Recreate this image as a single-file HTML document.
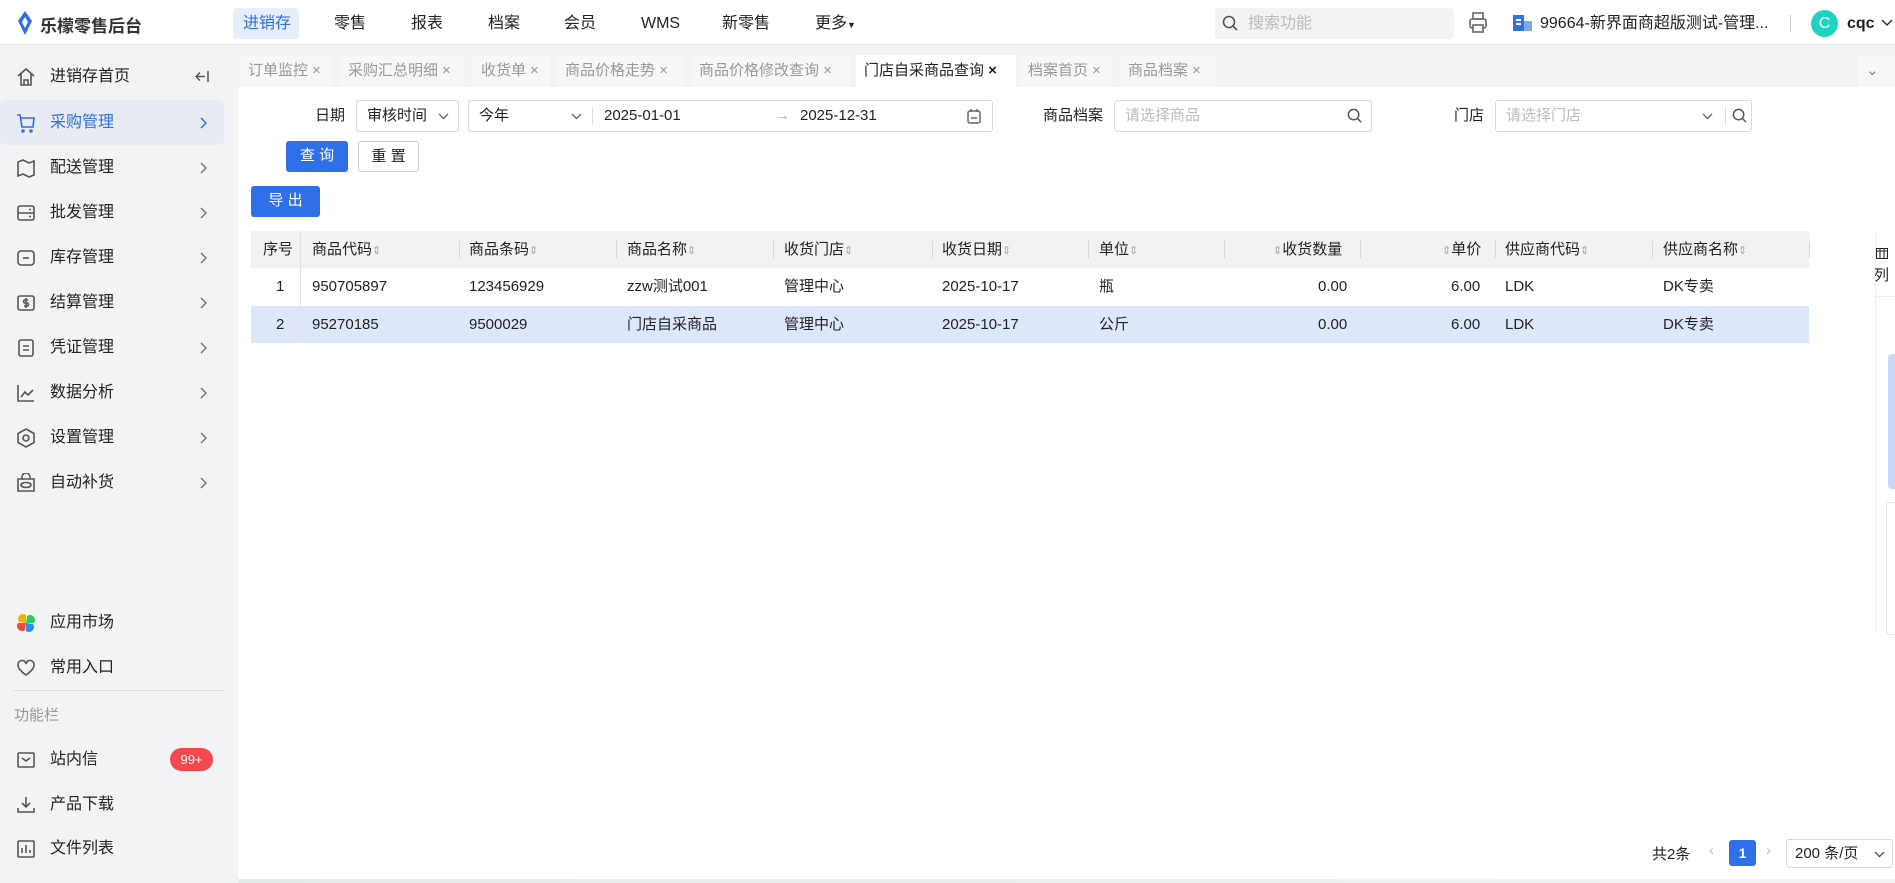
<!DOCTYPE html>
<html><head><meta charset="utf-8"><style>
*{box-sizing:border-box;margin:0;padding:0}
body{width:1895px;height:883px;overflow:hidden;background:#fff;font-family:"Liberation Sans","Noto Sans CJK SC",sans-serif;color:#222;font-size:15px;position:relative}
.a{position:absolute;white-space:nowrap}
.top{left:0;top:0;width:1895px;height:45px;border-bottom:1px solid #e2e3e6;background:#fff}
.nv{position:absolute;top:8px;height:31px;line-height:31px;font-size:16px}
.side{left:0;top:45px;width:238px;height:838px;background:#f2f3f5}
.si{position:absolute;left:0;width:224px;height:45px;font-size:16px;line-height:45px}
.si .t{position:absolute;left:50px}
.si .ch{position:absolute;left:199px;top:17px}
.si svg{position:absolute;left:16px;top:13px}
.tabbar{left:238px;top:45px;width:1657px;height:42px;background:#f2f3f5}
.tab{position:absolute;top:10px;height:32px;background:#f7f7f8;color:#999;font-size:15px;line-height:32px;padding-left:8px;border-radius:3px 3px 0 0}
.tab.on{background:#fff;color:#222}
.inp{position:absolute;border:1px solid #d9d9d9;border-radius:3px;height:32px;background:#fff;line-height:30px}
.lb{position:absolute;top:100px;height:32px;line-height:32px}
.btn{position:absolute;border-radius:3px;height:31px;line-height:29px;text-align:center;font-size:15px}
.th{position:absolute;top:0;height:37px;line-height:37px;font-size:15px;color:#222}
.sep{position:absolute;top:10px;width:1px;height:17px;background:#d8d8d8}
.td{position:absolute;line-height:37px;font-size:15px}
.sort{color:#aaa;font-size:11px}
</style></head><body>
<svg width="0" height="0" style="position:absolute"><defs><symbol id="chv" viewBox="0 0 8 12"><path d="M2 1l5 5-5 5" fill="none" stroke="#777" stroke-width="1.5"/></symbol></defs></svg>
<div class="a top">
 <svg class="a" style="left:17px;top:11px" width="16" height="24" viewBox="0 0 16 24"><path d="M8 0 L15 10 L8 24 L1 10Z" fill="#2f6fe8"/><path d="M8 6 L11 11 L8 17 L5 11Z" fill="#fff"/></svg>
 <div class="a" style="left:40px;top:12px;font-size:17px;font-weight:bold;color:#333">乐檬零售后台</div>
 <div class="a" style="left:233px;top:8px;width:66px;height:31px;background:#e6eefc;border-radius:4px"></div>
 <div class="nv" style="left:243px;color:#2f6fe8">进销存</div>
 <div class="nv" style="left:334px">零售</div>
 <div class="nv" style="left:411px">报表</div>
 <div class="nv" style="left:488px">档案</div>
 <div class="nv" style="left:564px">会员</div>
 <div class="nv" style="left:641px">WMS</div>
 <div class="nv" style="left:722px">新零售</div>
 <div class="nv" style="left:815px">更多<span style="font-size:9px">▼</span></div>
 <div class="a" style="left:1215px;top:8px;width:239px;height:31px;background:#f2f3f5;border-radius:4px"></div>
 <svg class="a" style="left:1222px;top:15px" width="17" height="17" viewBox="0 0 17 17"><circle cx="7" cy="7" r="5.5" fill="none" stroke="#555" stroke-width="1.6"/><path d="M11 11l4 4" stroke="#555" stroke-width="1.6"/></svg>
 <div class="nv" style="left:1248px;color:#bbb">搜索功能</div>
 <svg class="a" style="left:1468px;top:12px" width="20" height="22" viewBox="0 0 20 22"><rect x="5" y="1" width="10" height="6" fill="none" stroke="#666" stroke-width="1.6"/><rect x="2" y="7" width="16" height="9" rx="2" fill="none" stroke="#666" stroke-width="1.6"/><rect x="5" y="13" width="10" height="7" fill="#fff" stroke="#666" stroke-width="1.6"/></svg>
 <svg class="a" style="left:1512px;top:14px" width="22" height="18" viewBox="0 0 22 18"><rect x="1" y="1" width="11" height="16" fill="#2f6fe8"/><rect x="12" y="7" width="8" height="10" fill="#7fa6ef"/><rect x="4" y="5" width="5" height="2" fill="#fff"/><rect x="4" y="9" width="5" height="2" fill="#fff"/></svg>
 <div class="nv" style="left:1540px">99664-新界面商超版测试-管理...</div>
 <div class="a" style="left:1790px;top:15px;width:1px;height:17px;background:#ccc"></div>
 <div class="a" style="left:1811px;top:10px;width:27px;height:27px;border-radius:50%;background:#1fd3c0;color:#fff;text-align:center;line-height:27px;font-size:16px">C</div>
 <div class="nv" style="left:1847px;font-weight:bold">cqc</div>
 <svg class="a" style="left:1881px;top:19px" width="12" height="8" viewBox="0 0 12 8"><path d="M1 1l5 5 5-5" fill="none" stroke="#333" stroke-width="1.5"/></svg>
</div>
<div class="a side">
 <div class="si" style="top:9px"><svg width="20" height="20" viewBox="0 0 20 20" fill="none" stroke="#555" stroke-width="1.6"><path d="M2 9L10 2l8 7M5 7v11h10V7M8 18v-5h4v5"/></svg><span class="t">进销存首页</span><svg style="left:195px;top:16px" width="14" height="13" viewBox="0 0 14 13" fill="none" stroke="#555" stroke-width="1.5"><path d="M13 1v11M1 6.5h9M5 2.5l-4 4 4 4"/></svg></div>
 <div class="si" style="top:55px;background:#e8ebf1;border-radius:6px;color:#2f6fe8"><svg width="20" height="20" viewBox="0 0 20 20" fill="none" stroke="#2f6fe8" stroke-width="1.6"><path d="M1 2h3l2 12h11l1-9H5"/><circle cx="7" cy="18" r="1"/><circle cx="15" cy="18" r="1"/></svg><span class="t">采购管理</span><svg class="ch" width="8" height="12" viewBox="0 0 8 12" style="left:199px;top:17px"><path d="M2 1l5 5-5 5" fill="none" stroke="#2f6fe8" stroke-width="1.5"/></svg></div>
 <div class="si" style="top:100px"><svg width="20" height="20" viewBox="0 0 20 20" fill="none" stroke="#555" stroke-width="1.6"><path d="M2 4l5-2 6 3 5-2v14l-5 2-6-3-5 2z"/></svg><span class="t">配送管理</span><svg class="ch" width="8" height="12" style="left:199px;top:17px"><use href="#chv"/></svg></div>
 <div class="si" style="top:145px"><svg width="20" height="20" viewBox="0 0 20 20" fill="none" stroke="#555" stroke-width="1.6"><rect x="2" y="3" width="16" height="14" rx="2"/><path d="M2 10h16M13 6.5h2M13 13.5h2"/></svg><span class="t">批发管理</span><svg class="ch" width="8" height="12" style="left:199px;top:17px"><use href="#chv"/></svg></div>
 <div class="si" style="top:190px"><svg width="20" height="20" viewBox="0 0 20 20" fill="none" stroke="#555" stroke-width="1.6"><rect x="2" y="3" width="16" height="14" rx="3"/><path d="M7 10h6"/></svg><span class="t">库存管理</span><svg class="ch" width="8" height="12" style="left:199px;top:17px"><use href="#chv"/></svg></div>
 <div class="si" style="top:235px"><svg width="20" height="20" viewBox="0 0 20 20" fill="none" stroke="#555" stroke-width="1.6"><rect x="2" y="3" width="16" height="14" rx="2"/><path d="M12 7H9a1.5 1.5 0 000 3h2a1.5 1.5 0 010 3H8M10 5v10"/></svg><span class="t">结算管理</span><svg class="ch" width="8" height="12" style="left:199px;top:17px"><use href="#chv"/></svg></div>
 <div class="si" style="top:280px"><svg width="20" height="20" viewBox="0 0 20 20" fill="none" stroke="#555" stroke-width="1.6"><rect x="3" y="2" width="14" height="16" rx="2"/><path d="M7 8h6M7 12h6"/></svg><span class="t">凭证管理</span><svg class="ch" width="8" height="12" style="left:199px;top:17px"><use href="#chv"/></svg></div>
 <div class="si" style="top:325px"><svg width="20" height="20" viewBox="0 0 20 20" fill="none" stroke="#555" stroke-width="1.6"><path d="M2 2v16h16M5 14l4-5 3 3 5-5"/></svg><span class="t">数据分析</span><svg class="ch" width="8" height="12" style="left:199px;top:17px"><use href="#chv"/></svg></div>
 <div class="si" style="top:370px"><svg width="20" height="20" viewBox="0 0 20 20" fill="none" stroke="#555" stroke-width="1.6"><path d="M10 1l8 4.5v9L10 19l-8-4.5v-9z"/><circle cx="10" cy="10" r="3"/></svg><span class="t">设置管理</span><svg class="ch" width="8" height="12" style="left:199px;top:17px"><use href="#chv"/></svg></div>
 <div class="si" style="top:415px"><svg width="20" height="20" viewBox="0 0 20 20" fill="none" stroke="#555" stroke-width="1.6"><path d="M6 6V4a4 4 0 018 0v2M2 6h16v12H2z"/><ellipse cx="10" cy="12" rx="5" ry="2.5"/></svg><span class="t">自动补货</span><svg class="ch" width="8" height="12" style="left:199px;top:17px"><use href="#chv"/></svg></div>
 <div class="si" style="top:555px"><svg width="20" height="20" viewBox="0 0 20 20"><path d="M10 10V2a5 5 0 00-7 7z" fill="#f6b100"/><path d="M10 10h8a5 5 0 00-7-7z" fill="#2ecc5b"/><path d="M10 10v8a5 5 0 007-7z" fill="#2f8ff0"/><path d="M10 10H2a5 5 0 007 7z" fill="#f04a3c"/></svg><span class="t">应用市场</span></div>
 <div class="si" style="top:600px"><svg width="20" height="20" viewBox="0 0 20 20" fill="none" stroke="#555" stroke-width="1.6"><path d="M10 17S2 12 2 7a4 4 0 018-1 4 4 0 018 1c0 5-8 10-8 10z"/></svg><span class="t">常用入口</span></div>
 <div class="a" style="left:14px;top:645px;width:211px;height:1px;background:#dcdde0"></div>
 <div class="a" style="left:14px;top:659px;font-size:15px;color:#999">功能栏</div>
 <div class="si" style="top:692px"><svg width="20" height="20" viewBox="0 0 20 20" fill="none" stroke="#555" stroke-width="1.6"><rect x="2" y="3" width="16" height="14" rx="1"/><path d="M6 8l4 3 4-3"/></svg><span class="t">站内信</span><span class="a" style="left:170px;top:11px;width:43px;height:23px;border-radius:12px;background:#f5474f;color:#fff;font-size:13px;line-height:23px;text-align:center">99+</span></div>
 <div class="si" style="top:737px"><svg width="20" height="20" viewBox="0 0 20 20" fill="none" stroke="#555" stroke-width="1.6"><path d="M10 2v10M6 8l4 4 4-4M2 13v4h16v-4"/></svg><span class="t">产品下载</span></div>
 <div class="si" style="top:781px"><svg width="20" height="20" viewBox="0 0 20 20" fill="none" stroke="#555" stroke-width="1.6"><rect x="2" y="2" width="16" height="16" rx="1"/><path d="M6 14V9M10 14V6M14 14v-3"/></svg><span class="t">文件列表</span></div>
</div>
<div class="a tabbar">
 <div class="tab" style="left:2px;width:92px">订单监控 ×</div>
 <div class="tab" style="left:102px;width:125px">采购汇总明细 ×</div>
 <div class="tab" style="left:235px;width:77px">收货单 ×</div>
 <div class="tab" style="left:319px;width:128px">商品价格走势 ×</div>
 <div class="tab" style="left:453px;width:159px">商品价格修改查询 ×</div>
 <div class="tab on" style="left:618px;width:160px">门店自采商品查询 <b>×</b></div>
 <div class="tab" style="left:782px;width:93px">档案首页 ×</div>
 <div class="tab" style="left:882px;width:96px">商品档案 ×</div>
 <div class="tab" style="left:1620px;width:37px;color:#888">⌄</div>
</div>
<div class="lb" style="left:315px">日期</div>
<div class="inp" style="left:356px;top:100px;width:103px;padding-left:10px">审核时间<svg class="a" style="right:9px;top:12px" width="11" height="7" viewBox="0 0 11 7"><path d="M1 1l4.5 4.5L10 1" fill="none" stroke="#666" stroke-width="1.4"/></svg></div>
<div class="inp" style="left:468px;top:100px;width:525px">
 <span class="a" style="left:10px">今年</span><svg class="a" style="left:102px;top:12px" width="11" height="7" viewBox="0 0 11 7"><path d="M1 1l4.5 4.5L10 1" fill="none" stroke="#666" stroke-width="1.4"/></svg>
 <span class="a" style="left:123px;top:6px;width:1px;height:18px;background:#ddd"></span>
 <span class="a" style="left:135px">2025-01-01</span><span class="a" style="left:306px;color:#aaa">→</span><span class="a" style="left:331px">2025-12-31</span>
 <svg class="a" style="left:498px;top:7px" width="14" height="16" viewBox="0 0 14 16" fill="none" stroke="#666" stroke-width="1.5"><rect x="1" y="3" width="12" height="12" rx="2"/><path d="M4 1v3M10 1v3M4 10h6"/></svg>
</div>
<div class="lb" style="left:1043px">商品档案</div>
<div class="inp" style="left:1114px;top:100px;width:258px;padding-left:10px;color:#bbb">请选择商品<svg class="a" style="left:232px;top:7px" width="16" height="16" viewBox="0 0 17 17"><circle cx="7" cy="7" r="5.5" fill="none" stroke="#555" stroke-width="1.6"/><path d="M11 11l4 4" stroke="#555" stroke-width="1.6"/></svg></div>
<div class="lb" style="left:1454px">门店</div>
<div class="inp" style="left:1495px;top:100px;width:257px;padding-left:10px;color:#bbb">请选择门店<svg class="a" style="left:206px;top:12px" width="11" height="7" viewBox="0 0 11 7"><path d="M1 1l4.5 4.5L10 1" fill="none" stroke="#666" stroke-width="1.4"/></svg><span class="a" style="left:229px;top:6px;width:1px;height:18px;background:#ddd"></span><svg class="a" style="left:236px;top:7px" width="16" height="16" viewBox="0 0 17 17"><circle cx="7" cy="7" r="5.5" fill="none" stroke="#555" stroke-width="1.6"/><path d="M11 11l4 4" stroke="#555" stroke-width="1.6"/></svg></div>
<div class="btn" style="left:286px;top:141px;width:62px;background:#2f6fe8;color:#fff">查 询</div>
<div class="btn" style="left:358px;top:141px;width:61px;border:1px solid #ccc;background:#fff">重 置</div>
<div class="btn" style="left:251px;top:186px;width:69px;background:#2f6fe8;color:#fff">导 出</div>

<div class="a" style="left:251px;top:231px;width:1558px;height:37px;background:#f1f2f4"></div>
<div class="a" style="left:251px;top:306px;width:1558px;height:37px;background:#dce7fb"></div>
<div class="a" style="left:300px;top:231px;width:1px;height:112px;background:#e2e2e2"></div>
<div class="a" style="left:251px;top:231px;width:1558px;height:112px">
 <div class="th" style="left:12px">序号</div>
 <div class="th" style="left:61px">商品代码<span class="sort">⇕</span></div><div class="sep" style="left:208px"></div>
 <div class="th" style="left:218px">商品条码<span class="sort">⇕</span></div><div class="sep" style="left:365px"></div>
 <div class="th" style="left:376px">商品名称<span class="sort">⇕</span></div><div class="sep" style="left:522px"></div>
 <div class="th" style="left:533px">收货门店<span class="sort">⇕</span></div><div class="sep" style="left:681px"></div>
 <div class="th" style="left:691px">收货日期<span class="sort">⇕</span></div><div class="sep" style="left:837px"></div>
 <div class="th" style="left:848px">单位<span class="sort">⇕</span></div><div class="sep" style="left:973px"></div>
 <div class="th" style="left:1022px"><span class="sort">⇕</span>收货数量</div><div class="sep" style="left:1109px"></div>
 <div class="th" style="left:1191px"><span class="sort">⇕</span>单价</div><div class="sep" style="left:1244px"></div>
 <div class="th" style="left:1254px">供应商代码<span class="sort">⇕</span></div><div class="sep" style="left:1401px"></div>
 <div class="th" style="left:1412px">供应商名称<span class="sort">⇕</span></div><div class="sep" style="left:1558px"></div>
 <div class="td" style="top:37px;left:25px">1</div><div class="td" style="top:37px;left:61px">950705897</div><div class="td" style="top:37px;left:218px">123456929</div><div class="td" style="top:37px;left:376px">zzw测试001</div><div class="td" style="top:37px;left:533px">管理中心</div><div class="td" style="top:37px;left:691px">2025-10-17</div><div class="td" style="top:37px;left:848px">瓶</div><div class="td" style="top:37px;left:1067px">0.00</div><div class="td" style="top:37px;left:1200px">6.00</div><div class="td" style="top:37px;left:1254px">LDK</div><div class="td" style="top:37px;left:1412px">DK专卖</div>
 <div class="td" style="top:75px;left:25px">2</div><div class="td" style="top:75px;left:61px">95270185</div><div class="td" style="top:75px;left:218px">9500029</div><div class="td" style="top:75px;left:376px">门店自采商品</div><div class="td" style="top:75px;left:533px">管理中心</div><div class="td" style="top:75px;left:691px">2025-10-17</div><div class="td" style="top:75px;left:848px">公斤</div><div class="td" style="top:75px;left:1067px">0.00</div><div class="td" style="top:75px;left:1200px">6.00</div><div class="td" style="top:75px;left:1254px">LDK</div><div class="td" style="top:75px;left:1412px">DK专卖</div>
</div>
<div class="a" style="left:1875px;top:231px;width:1px;height:400px;background:#eee"></div>
<div class="a" style="left:1875px;top:296px;width:20px;height:1px;background:#eee"></div>
<svg class="a" style="left:1876px;top:248px" width="12" height="11" viewBox="0 0 12 11"><rect x="0.5" y="0.5" width="11" height="10" fill="none" stroke="#222"/><path d="M4 1v9M8 1v9M0 3h12" stroke="#222"/></svg>
<div class="a" style="left:1874px;top:264px;font-size:15px">列</div>
<div class="a" style="left:1888px;top:354px;width:7px;height:135px;background:#c9d8f6;border-radius:4px 0 0 4px"></div>
<div class="a" style="left:1886px;top:502px;width:9px;height:133px;border:1px solid #e4e4e4;border-right:none;border-radius:4px 0 0 4px;background:#fff"></div>

<div class="a" style="left:1652px;top:843px;font-size:15px">共2条</div>
<div class="a" style="left:1709px;top:842px;color:#bbb">‹</div>
<div class="a" style="left:1729px;top:840px;width:27px;height:26px;background:#2f6fe8;color:#fff;border-radius:3px;text-align:center;line-height:26px;font-size:14px;font-weight:bold">1</div>
<div class="a" style="left:1766px;top:842px;color:#bbb">›</div>
<div class="inp" style="left:1786px;top:839px;width:107px;height:29px;line-height:27px;padding-left:8px;font-size:15px">200 条/页<svg class="a" style="right:7px;top:11px" width="11" height="7" viewBox="0 0 11 7"><path d="M1 1l4.5 4.5L10 1" fill="none" stroke="#555" stroke-width="1.4"/></svg></div>
<div class="a" style="left:238px;top:879px;width:1657px;height:4px;background:linear-gradient(90deg,#e4ece8,#f2f3f5)"></div>
</body></html>
